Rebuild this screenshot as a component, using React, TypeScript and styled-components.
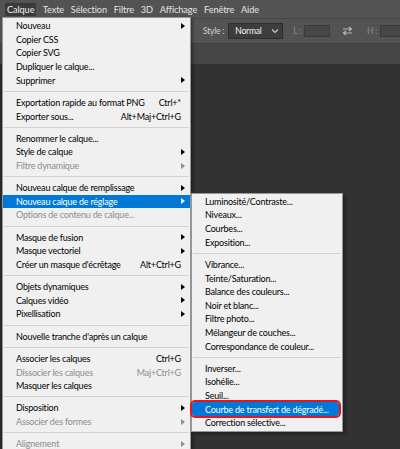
import React from 'react';
import styled, { createGlobalStyle, css } from 'styled-components';

type Entry =
  | 'sep'
  | { label: string; shortcut?: string; arrow?: boolean; disabled?: boolean; active?: boolean; outlined?: boolean };

const topMenus = ['Calque', 'Texte', 'Sélection', 'Filtre', '3D', 'Affichage', 'Fenêtre', 'Aide'];

const layerMenu: Entry[] = [
  { label: 'Nouveau', arrow: true },
  { label: 'Copier CSS' },
  { label: 'Copier SVG' },
  { label: 'Dupliquer le calque...' },
  { label: 'Supprimer', arrow: true },
  'sep',
  { label: 'Exportation rapide au format PNG', shortcut: 'Ctrl+*' },
  { label: 'Exporter sous...', shortcut: 'Alt+Maj+Ctrl+G' },
  'sep',
  { label: 'Renommer le calque...' },
  { label: 'Style de calque', arrow: true },
  { label: 'Filtre dynamique', arrow: true, disabled: true },
  'sep',
  { label: 'Nouveau calque de remplissage', arrow: true },
  { label: 'Nouveau calque de réglage', arrow: true, active: true },
  { label: 'Options de contenu de calque...', disabled: true },
  'sep',
  { label: 'Masque de fusion', arrow: true },
  { label: 'Masque vectoriel', arrow: true },
  { label: "Créer un masque d'écrêtage", shortcut: 'Alt+Ctrl+G' },
  'sep',
  { label: 'Objets dynamiques', arrow: true },
  { label: 'Calques vidéo', arrow: true },
  { label: 'Pixellisation', arrow: true },
  'sep',
  { label: "Nouvelle tranche d'après un calque" },
  'sep',
  { label: 'Associer les calques', shortcut: 'Ctrl+G' },
  { label: 'Dissocier les calques', shortcut: 'Maj+Ctrl+G', disabled: true },
  { label: 'Masquer les calques' },
  'sep',
  { label: 'Disposition', arrow: true },
  { label: 'Associer des formes', arrow: true, disabled: true },
  'sep',
  { label: 'Alignement', arrow: true, disabled: true },
];

const adjustMenu: Entry[] = [
  { label: 'Luminosité/Contraste...' },
  { label: 'Niveaux...' },
  { label: 'Courbes...' },
  { label: 'Exposition...' },
  'sep',
  { label: 'Vibrance...' },
  { label: 'Teinte/Saturation...' },
  { label: 'Balance des couleurs...' },
  { label: 'Noir et blanc...' },
  { label: 'Filtre photo...' },
  { label: 'Mélangeur de couches...' },
  { label: 'Correspondance de couleur...' },
  'sep',
  { label: 'Inverser...' },
  { label: 'Isohélie...' },
  { label: 'Seuil...' },
  { label: 'Courbe de transfert de dégradé...', active: true, outlined: true },
  { label: 'Correction sélective...' },
];

const GlobalStyle = createGlobalStyle`
  html, body {
    margin: 0;
    padding: 0;
    background: #323232;
    overflow: hidden;
  }
  * { box-sizing: border-box; }
`;

const Page = styled.div`
  width: 400px;
  height: 449px;
  display: flex;
  flex-direction: column;
  font-family: Lato, "Noto Sans", sans-serif;
  font-size: 9px;
  letter-spacing: -0.2px;
  position: relative;
  overflow: hidden;
`;

const MenuBar = styled.div`
  height: 19px;
  background: #535353;
  display: flex;
  align-items: center;
  padding-left: 5px;
  border-bottom: 1px solid #454545;
  font-size: 9.2px;
  letter-spacing: -0.1px;
`;

const MenuTitle = styled.div<{ $open?: boolean }>`
  color: #e4e4e4;
  padding: 0 3.4px;
  height: 13px;
  line-height: 13px;
  ${(p) =>
    p.$open &&
    css`
      background: #3a3a3a;
      color: #f0f0f0;
      padding: 0 2px;
      margin-right: 3px;
    `}
`;

const OptionsBar = styled.div`
  height: 25px;
  background: #535353;
  display: flex;
  align-items: center;
  padding-left: 203px;
  white-space: nowrap;
  font-size: 8.5px;
  border-bottom: 1px solid #3f3f3f;
`;

const OptLabel = styled.span<{ $dim?: boolean }>`
  color: ${(p) => (p.$dim ? '#8a8a8a' : '#d0d0d0')};
  margin-right: ${(p) => (p.$dim ? 3 : 4)}px;
`;

const Select = styled.div`
  flex-shrink: 0;
  width: 55px;
  height: 16px;
  background: #3d3d3d;
  border: 1px solid #2e2e2e;
  display: flex;
  align-items: center;
  justify-content: space-between;
  padding: 0 3px 0 6px;
  color: #f2f2f2;
  margin-right: 10px;
`;

const Field = styled.div<{ $w: number }>`
  flex-shrink: 0;
  width: ${(p) => p.$w}px;
  height: 12px;
  background: #474747;
  border: 1px solid #3a3a3a;
  margin-right: 12px;
`;

const TabStrip = styled.div`
  height: 20px;
  background: #464646;
`;

const Workspace = styled.div`
  flex: 1;
  background: #323232;
  border-left: 2px solid #2a2a2a;
`;

const Dropdown = styled.div`
  position: absolute;
  top: 17px;
  left: 2px;
  width: 189px;
  background: #f0f0f0;
  border: 1px solid #979797;
  padding: 1px 0;
  box-shadow: 2px 2px 3px rgba(0, 0, 0, 0.35);
`;

const SubMenu = styled(Dropdown)`
  top: -2px;
  left: 188px;
  width: 152px;
  padding: 1px 0 2px;
`;

const Row = styled.div<{ $disabled?: boolean; $active?: boolean; $outlined?: boolean }>`
  position: relative;
  height: 13.6px;
  display: flex;
  align-items: center;
  padding: 0 3px 0 13px;
  white-space: nowrap;
  color: ${(p) => (p.$disabled ? '#8d8d8d' : '#000')};
  ${(p) =>
    p.$active &&
    css`
      background: #0078d7;
      color: #fff;
    `}
  ${(p) =>
    p.$outlined &&
    css`
      margin: 0 3px 0 0;
      padding-left: 13px;
      outline: 2px solid #e8141c;
      outline-offset: 0px;
      border-radius: 3px;
      z-index: 1;
    `}
`;

const Label = styled.span`
  flex: 1;
`;

const Shortcut = styled.span`
  margin-right: 6px;
`;

const Arrow = styled.span<{ $color: string }>`
  width: 0;
  height: 0;
  border-top: 3.5px solid transparent;
  border-bottom: 3.5px solid transparent;
  border-left: 4px solid ${(p) => p.$color};
  margin-right: 2px;
`;

const Separator = styled.div`
  height: 1px;
  background: #d2d2d2;
  margin: 3.85px 1px;
`;

const Chevron = () => (
  <svg width="8" height="6" viewBox="0 0 8 6">
    <path d="M1 1.5 L4 4.5 L7 1.5" fill="none" stroke="#cfcfcf" strokeWidth="1.1" />
  </svg>
);

const SwapIcon = () => (
  <svg width="11" height="10" viewBox="0 0 11 10" style={{ marginRight: 14, flexShrink: 0 }}>
    <path d="M1 3 H9 M7 1 L9.5 3 L7 5" fill="none" stroke="#b8b8b8" strokeWidth="1.2" />
    <path d="M10 7 H2 M4 5 L1.5 7 L4 9" fill="none" stroke="#b8b8b8" strokeWidth="1.2" />
  </svg>
);

const MenuList = ({ items, children }: { items: Entry[]; children?: React.ReactNode }) => (
  <>
    {items.map((it, i) => {
      if (it === 'sep') return <Separator key={i} />;
      const arrowColor = it.active ? '#fff' : it.disabled ? '#8d8d8d' : '#000';
      return (
        <Row key={i} $disabled={it.disabled} $active={it.active} $outlined={it.outlined}>
          <Label>{it.label}</Label>
          {it.shortcut && <Shortcut>{it.shortcut}</Shortcut>}
          {it.arrow && <Arrow $color={arrowColor} />}
          {it.active && !it.outlined && children}
        </Row>
      );
    })}
  </>
);

export default function App() {
  return (
    <Page>
      <GlobalStyle />
      <MenuBar>
        {topMenus.map((m, i) => (
          <MenuTitle key={m} $open={i === 0}>
            {m}
          </MenuTitle>
        ))}
      </MenuBar>
      <OptionsBar>
        <OptLabel>Style :</OptLabel>
        <Select>
          <span>Normal</span>
          <Chevron />
        </Select>
        <OptLabel $dim>L :</OptLabel>
        <Field $w={26} />
        <SwapIcon />
        <OptLabel $dim>H :</OptLabel>
        <Field $w={30} />
      </OptionsBar>
      <TabStrip />
      <Workspace />
      <Dropdown>
        <MenuList items={layerMenu}>
          <SubMenu>
            <MenuList items={adjustMenu} />
          </SubMenu>
        </MenuList>
      </Dropdown>
    </Page>
  );
}
